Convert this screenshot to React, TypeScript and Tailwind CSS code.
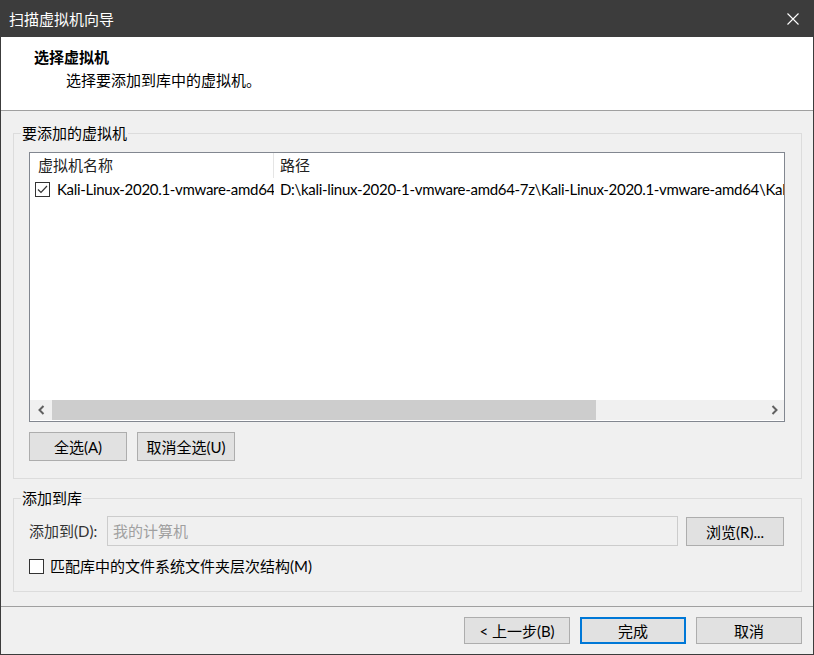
import React from "react";

const vmName = "Kali-Linux-2020.1-vmware-amd64";
const vmPath =
  "D:\\kali-linux-2020-1-vmware-amd64-7z\\Kali-Linux-2020.1-vmware-amd64\\Kali-Linux-2020.1-vmware-amd64.vmx";

function CheckBox({ checked }: { checked?: boolean }) {
  return (
    <div className="w-[15px] h-[15px] shrink-0 border border-[#333333] bg-white flex items-center justify-center">
      {checked && (
        <svg width="13" height="13" viewBox="0 0 13 13">
          <polyline
            points="2,6.5 5,9.5 11,3"
            fill="none"
            stroke="#333333"
            strokeWidth="1.2"
          />
        </svg>
      )}
    </div>
  );
}

function Button({
  children,
  className = "",
  primary,
}: {
  children: React.ReactNode;
  className?: string;
  primary?: boolean;
}) {
  return (
    <button
      className={
        "bg-[#e1e1e1] flex items-center justify-center leading-[20px] text-black " +
        (primary ? "border-2 border-[#0078d7] " : "border border-[#adadad] ") +
        className
      }
    >
      {children}
    </button>
  );
}

function Chevron({ dir }: { dir: "left" | "right" }) {
  return (
    <svg width="7" height="10" viewBox="0 0 7 10">
      <polyline
        points={dir == "left" ? "5.5,1 1.5,5 5.5,9" : "1.5,1 5.5,5 1.5,9"}
        fill="none"
        stroke="#606060"
        strokeWidth="2"
      />
    </svg>
  );
}

export default function App() {
  return (
    <div className="w-[814px] h-[655px] flex flex-col border-x border-b border-[#3c3c3c] bg-[#f0f0f0] text-[15px] text-black font-['Lato','Noto_Sans_CJK_SC',sans-serif] select-none">
      {/* title bar */}
      <div className="h-[37px] shrink-0 bg-[#3c3c3c] flex items-center justify-between pl-[8px] pr-[14px] text-white">
        <span className="leading-[20px]">扫描虚拟机向导</span>
        <svg width="12" height="12" viewBox="0 0 12 12">
          <path d="M0.5 0.5 L11.5 11.5 M11.5 0.5 L0.5 11.5" stroke="#ffffff" strokeWidth="1.1" />
        </svg>
      </div>

      {/* header */}
      <div className="h-[74px] shrink-0 bg-white border-b border-[#a0a0a0] pt-[10px] pl-[33px]">
        <div className="font-bold leading-[20px]">选择虚拟机</div>
        <div className="pl-[32px] mt-[3px] leading-[20px]">选择要添加到库中的虚拟机。</div>
      </div>

      {/* body */}
      <div className="h-[495px] shrink-0 pl-[12px] pr-[11px] pt-[12px]">
        <fieldset className="border border-[#dcdcdc] pb-[17px]">
          <legend className="ml-[7px] px-[1px] leading-[20px]">要添加的虚拟机</legend>
          <div className="ml-[15px] mt-[9px] w-[756px] h-[270px] border border-[#828790] bg-white flex flex-col">
            <div className="h-[25px] flex text-[#222222]">
              <div className="w-[244px] border-r border-[#e5e5e5] pl-[8px] leading-[25px]">虚拟机名称</div>
              <div className="pl-[6px] leading-[25px]">路径</div>
            </div>
            <div className="h-[22px] flex items-center tracking-[-0.3px]">
              <div className="w-[244px] pl-[5px] flex items-center overflow-hidden whitespace-nowrap">
                <CheckBox checked />
                <span className="ml-[7px] leading-[22px]">{vmName}</span>
              </div>
              <div className="flex-1 pl-[6px] overflow-hidden whitespace-nowrap leading-[22px]">{vmPath}</div>
            </div>
            <div className="flex-1" />
            <div className="h-[20px] bg-[#f0f0f0] flex items-center">
              <div className="w-[22px] h-full flex items-center justify-center">
                <Chevron dir="left" />
              </div>
              <div className="w-[544px] h-full bg-[#cdcdcd]" />
              <div className="flex-1" />
              <div className="w-[20px] h-full flex items-center justify-center">
                <Chevron dir="right" />
              </div>
            </div>
            <div className="h-[1px]" />
          </div>
          <div className="ml-[15px] mt-[10px] flex gap-[10px]">
            <Button className="w-[98px] h-[29px]">全选(A)</Button>
            <Button className="w-[98px] h-[29px]">取消全选(U)</Button>
          </div>
        </fieldset>

        <fieldset className="mt-[9px] border border-[#dcdcdc] pb-[15px]">
          <legend className="ml-[7px] px-[1px] leading-[20px]">添加到库</legend>
          <div className="mt-[8px] ml-[15px] flex">
            <div className="w-[78px] h-[30px] flex items-center text-[#333333]">添加到(D):</div>
            <div className="w-[571px] h-[30px] border border-[#cccccc] bg-[#f0f0f0] pl-[5px] flex items-center text-[#a0a0a0]">
              我的计算机
            </div>
            <Button className="ml-[8px] mt-[1px] w-[98px] h-[29px]">浏览(R)...</Button>
          </div>
          <div className="mt-[10px] ml-[15px] h-[20px] flex items-center">
            <CheckBox />
            <span className="ml-[6px] leading-[20px]">匹配库中的文件系统文件夹层次结构(M)</span>
          </div>
        </fieldset>
      </div>

      {/* footer */}
      <div className="flex-1 border-t border-[#a0a0a0] pt-[10px] pr-[11px] flex justify-end gap-[10px]">
        <Button className="w-[106px] h-[27px]">&lt; 上一步(B)</Button>
        <Button primary className="w-[106px] h-[27px]">完成</Button>
        <Button className="w-[106px] h-[27px]">取消</Button>
      </div>
    </div>
  );
}
